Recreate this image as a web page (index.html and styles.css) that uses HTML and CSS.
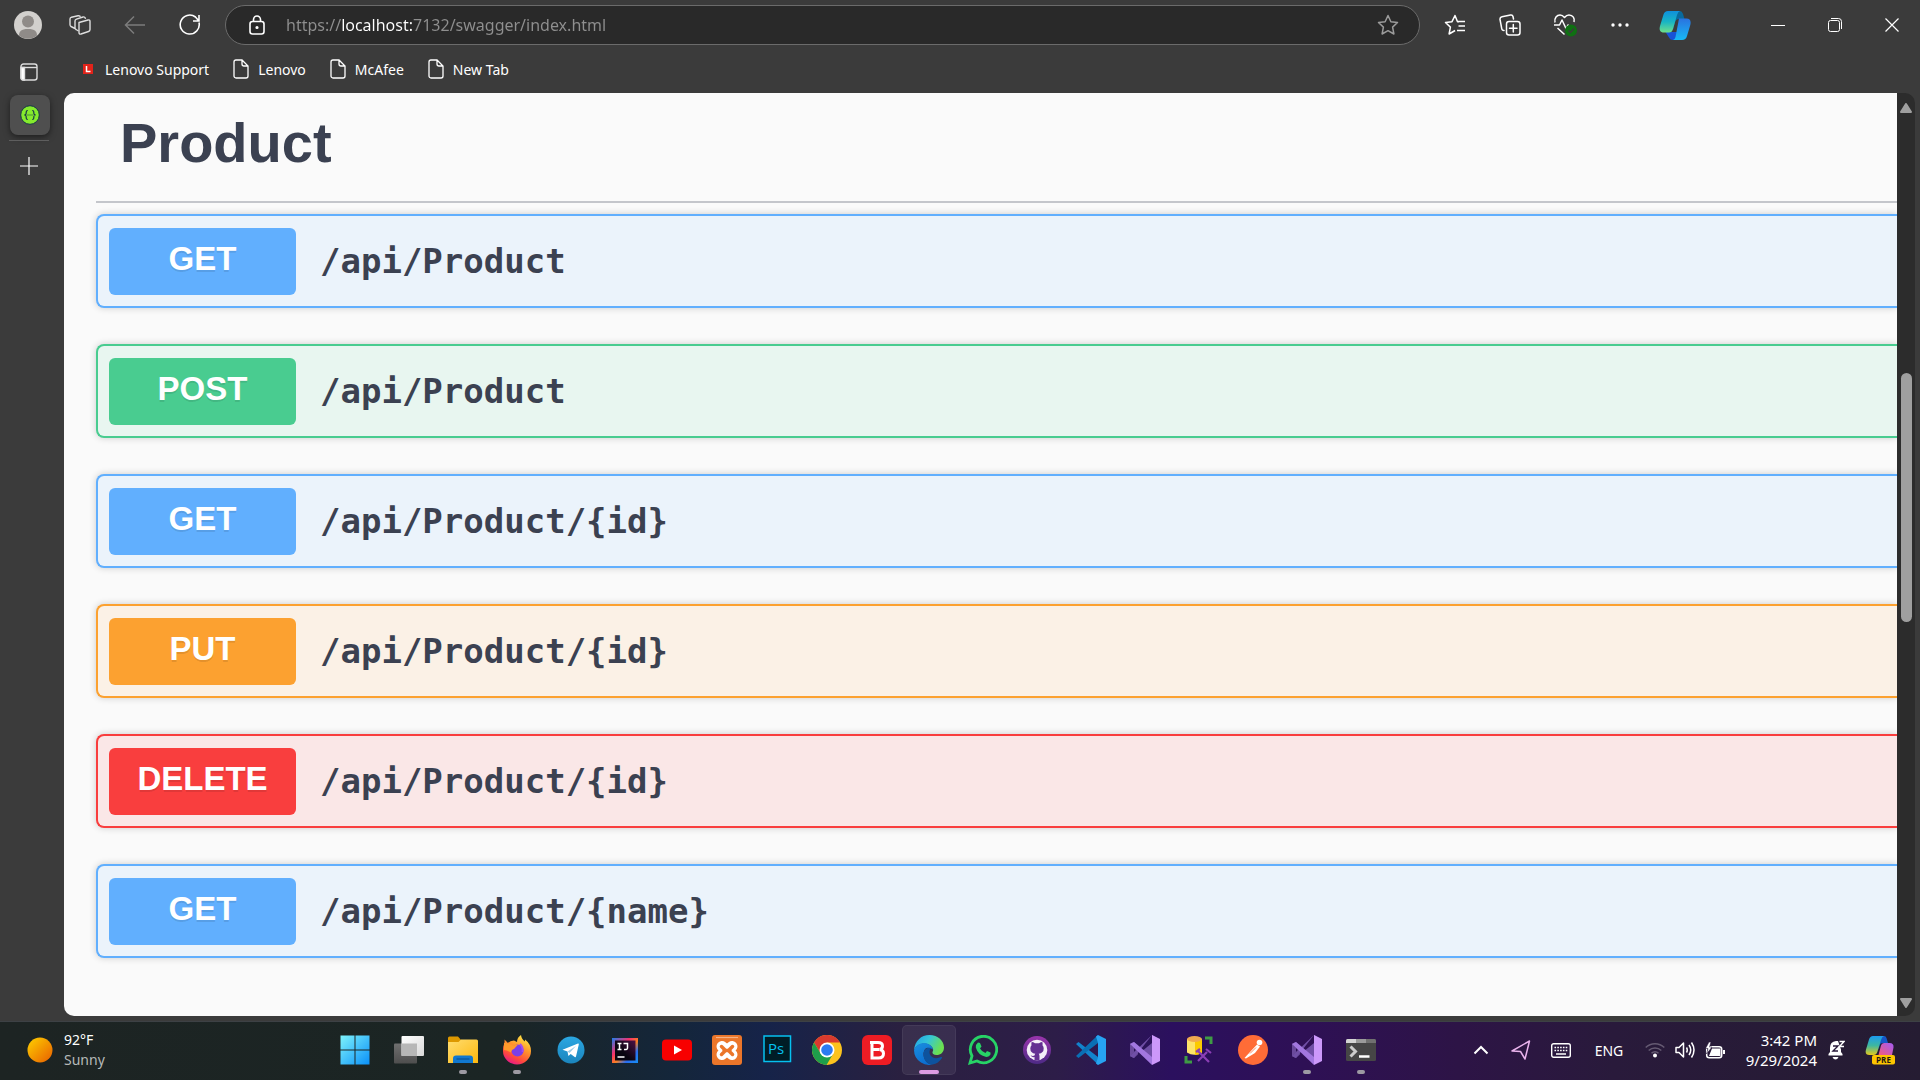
FILE: index.html
```html
<!DOCTYPE html>
<html lang="en">
<head>
<meta charset="utf-8">
<meta name="viewport" content="width=device-width, initial-scale=1">
<title>Swagger UI</title>
<link rel="stylesheet" href="styles.css">
</head>
<body>
<svg class="defs" aria-hidden="true">
  <defs>
    <linearGradient id="sun" x1="0" y1="0" x2="1" y2="1"><stop offset=".1" stop-color="#fcc600"/><stop offset="1" stop-color="#e85e00"/></linearGradient>
    <linearGradient id="win" x1="0" y1="0" x2="1" y2="1"><stop offset="0" stop-color="#7ef3fb"/><stop offset="1" stop-color="#0a90f8"/></linearGradient>
    <linearGradient id="folder" x1="0" y1="0" x2="1" y2="1"><stop offset="0" stop-color="#ffdd70"/><stop offset="1" stop-color="#fdb80e"/></linearGradient>
    <linearGradient id="fox" x1=".8" y1="0" x2=".3" y2="1"><stop offset="0" stop-color="#fff04a"/><stop offset=".4" stop-color="#ff9a2b"/><stop offset=".75" stop-color="#ff4a3c"/><stop offset="1" stop-color="#e5178c"/></linearGradient>
    <linearGradient id="tele" x1="0" y1="0" x2="0" y2="1"><stop offset="0" stop-color="#2ba7e2"/><stop offset="1" stop-color="#1b85bd"/></linearGradient>
    <linearGradient id="idea" x1="0" y1="0" x2="1" y2="1"><stop offset="0" stop-color="#1b7ff0"/><stop offset=".35" stop-color="#f7316c"/><stop offset=".55" stop-color="#fc8020"/><stop offset=".75" stop-color="#2a6df0"/><stop offset="1" stop-color="#1690f5"/></linearGradient>
    <linearGradient id="ideabg" x1="0" y1="1" x2="1" y2="0"><stop offset=".4" stop-color="#080510"/><stop offset="1" stop-color="#4d1046"/></linearGradient>
    <linearGradient id="edgea" x1="0" y1="0" x2="1" y2=".4"><stop offset="0" stop-color="#1f9fe8"/><stop offset=".5" stop-color="#35c6d8"/><stop offset="1" stop-color="#6be051"/></linearGradient>
    <linearGradient id="edgeb" x1="0" y1="0" x2=".5" y2="1"><stop offset="0" stop-color="#1a8fe0"/><stop offset="1" stop-color="#0c6ed0"/></linearGradient>
    <linearGradient id="cpa" x1="0" y1="0" x2="0" y2="1"><stop offset="0" stop-color="#0f8fdc"/><stop offset=".5" stop-color="#18b5c4"/><stop offset="1" stop-color="#6fe08a"/></linearGradient>
    <linearGradient id="cpb" x1="0" y1="1" x2="0" y2="0"><stop offset="0" stop-color="#17b9f5"/><stop offset="1" stop-color="#2a72df"/></linearGradient>
    <linearGradient id="cpc" x1="0" y1="0" x2="0" y2="1"><stop offset="0" stop-color="#1c9cf0"/><stop offset=".5" stop-color="#3db7a0"/><stop offset="1" stop-color="#e4c91d"/></linearGradient>
    <linearGradient id="cpd" x1="1" y1="0" x2="0" y2="1"><stop offset="0" stop-color="#a25bf5"/><stop offset="1" stop-color="#f25a7d"/></linearGradient>
    <linearGradient id="git" x1="0" y1="0" x2="0" y2="1"><stop offset="0" stop-color="#9a35ad"/><stop offset="1" stop-color="#4d2a85"/></linearGradient>
    <linearGradient id="tv" x1="0" y1="0" x2="1" y2="1"><stop offset="0" stop-color="#fff"/><stop offset="1" stop-color="#d9d9d9"/></linearGradient>
    <linearGradient id="tv2" x1="0" y1="0" x2="0" y2="1"><stop offset="0" stop-color="#6f6f6f"/><stop offset="1" stop-color="#4e4e4e"/></linearGradient>
    <symbol id="page" viewBox="0 0 16 20"><path d="M3 1h6l6 6v10a2 2 0 0 1-2 2H3a2 2 0 0 1-2-2V3a2 2 0 0 1 2-2zM9 1v4a2 2 0 0 0 2 2h4" fill="none" stroke="#fff" stroke-width="1.3"/></symbol>
    <symbol id="vs" viewBox="0 0 30 30"><path d="M0 9l4-2v16l-4-2z" fill="#6b4a9c"/><path d="M4 7l4 3.500v9L4 23l-4-2 6-6-6-6z" fill="#60438f"/><path d="M4 7L22 29l7-3V4l-7-4L4 23l-4-2L22 0v8L11 17z" fill="#704fa6"/><path d="M0 9l4-2 18 15v8L0 9z" fill="#a277df"/><path d="M22 0l8 4v22l-8 4z" fill="#cc98fa"/></symbol>
  </defs>
</svg>

<div class="screen">
  <div class="browser">
    <header class="toolbar">
      <button class="tool profile" aria-label="Profile"><svg width="28" height="28" viewBox="0 0 28 28"><circle cx="14" cy="14" r="14" fill="#d2d0cd"/><circle cx="14" cy="10.500" r="6" fill="#8f8b88"/><path d="M5 24.500c0-4 2-6.500 9-6.500s9 2.500 9 6.500a14 14 0 0 1-18 0z" fill="#8f8b88"/></svg></button>
      <button class="tool" aria-label="Workspaces"><svg width="22" height="20" viewBox="0 0 22 20" fill="none" stroke="#dedede" stroke-width="1.400" stroke-linejoin="round"><path d="M10 7.500l9-2.500q2-.5 2 1.500v8q0 1.500-1.500 2l-7.500 2.500q-2 .5-2-1.500z"/><path d="M9.500 16l-2.500-1.500q-1-.5-1-2V6q0-1.300 1.500-1.800L14 2q2-.5 2.500 1.800M6 13.500l-4-2q-1-.5-1-2V4q0-1.300 1.500-1.800L9 .8q2-.3 2.500 1"/></svg></button>
      <button class="tool" aria-label="Back"><svg width="22" height="20" viewBox="0 0 22 20" fill="none" stroke="#7c7c7c" stroke-width="1.500"><path d="M21 10H1.500M10 1.500L1.500 10l8.500 8.500"/></svg></button>
      <button class="tool" aria-label="Refresh"><svg width="22" height="22" viewBox="0 0 22 22" fill="none" stroke="#fff" stroke-width="1.600"><path d="M20 8.500A9.500 9.500 0 1 1 16.500 3l3 3.500M20 1v6h-6"/></svg></button>
      <form class="omnibox">
        <svg width="18" height="20" viewBox="0 0 18 20" fill="none" stroke="#fff" stroke-width="1.600"><rect x="2" y="6.500" width="14" height="12.500" rx="2.500"/><path d="M5.500 6.500V4.500a3.500 3.500 0 0 1 7 0v2"/><circle cx="9" cy="12.500" r=".8" fill="#fff"/></svg>
        <input class="url" type="text" aria-label="Address" value="https://localhost:7132/swagger/index.html">
        <button class="star" type="button" aria-label="Add to favorites"><svg width="22" height="22" viewBox="0 0 22 22" fill="none" stroke="#9b9b9b" stroke-width="1.500" stroke-linejoin="round"><path d="M11 1.500l2.900 6.200 6.600.8-4.900 4.600 1.300 6.900L11 16.700 5.100 20l1.300-6.900L1.500 8.500l6.600-.8z"/></svg></button>
      </form>
      <button class="tool" aria-label="Favorites"><svg width="22" height="22" viewBox="0 0 22 22" fill="none" stroke="#fff" stroke-width="1.500" stroke-linejoin="round"><path d="M15 7.700H13.500L11 1.500 8 7.700l-6.500.8 4.900 4.600L5.100 20l6-3.500M13 7.500h8M14.500 12h6.500M13 16.500h8"/></svg></button>
      <button class="tool" aria-label="Collections"><svg width="22" height="22" viewBox="0 0 22 22" fill="none" stroke="#fff" stroke-width="1.500" stroke-linecap="round"><rect x="7.500" y="7.500" width="13.500" height="13.500" rx="2.500"/><path d="M14.300 10.500v7.500M10.500 14.300h7.500M5 16.500q-2 0-2.300-2L1 5.500Q.8 3.300 3 2.800L11.500 1q2-.4 2.500 1.500L14.500 5"/></svg></button>
      <button class="tool" aria-label="Browser essentials"><svg width="24" height="24" viewBox="0 0 24 24" fill="none" stroke="#fff" stroke-width="1.500" stroke-linejoin="round"><path d="M2 9.500C1 5 4 2 7 2q2.500 0 4.500 2.500Q13.500 2 16 2c4 0 6 3.500 5 7M1 12h5.500L9 7l4 8.500 2.500-4M4.500 15l7 6.500"/><circle cx="18" cy="17.500" r="6" fill="#0f7012" stroke="none"/><path d="M15.500 17.500l2 2 3.500-4" stroke="#3b3b3b"/></svg></button>
      <button class="tool" aria-label="Settings and more"><svg width="18" height="6" viewBox="0 0 18 6" fill="#fff"><circle cx="2" cy="3" r="1.700"/><circle cx="9" cy="3" r="1.700"/><circle cx="16" cy="3" r="1.700"/></svg></button>
      <button class="tool" aria-label="Copilot"><svg width="32" height="30" viewBox="0 0 32 30"><path d="M15 1h6q2 0 3 3l1.500 5H20q-3 0-4 3l-2 8z" fill="#096a9e"/><path d="M6.500 22H20l-3.500 8H14q-3 0-4-2.500z" fill="#1853d6"/><path d="M9 1h12q-2 .5-3 4l-4 14q-1 3.500-4 3.500H5C1 22.500 0 20 1 16L4.500 4.500Q5.500 1 9 1z" fill="url(#cpa)"/><path d="M20 8.500h7.500C31 8.500 32.300 11 31.300 15L28 26q-1 4-5 4h-9q2-.5 2.500-3z" fill="url(#cpb)"/></svg></button>
      <div class="window-controls">
        <button aria-label="Minimize"><svg width="14" height="14" viewBox="0 0 14 14" stroke="#fff"><path d="M0 7.500h14"/></svg></button>
        <button aria-label="Restore"><svg width="14" height="14" viewBox="0 0 14 14" fill="none" stroke="#fff"><rect x=".5" y="2.500" width="11" height="11" rx="2"/><path d="M3 .5h7.500q3 0 3 3V11"/></svg></button>
        <button aria-label="Close"><svg width="14" height="14" viewBox="0 0 14 14" stroke="#fff" stroke-width="1.200"><path d="M.5.5l13 13M13.500.5l-13 13"/></svg></button>
      </div>
    </header>

    <div class="workspace">
      <aside class="tabs">
        <button class="tab-toggle" aria-label="Tab actions"><svg width="18" height="18" viewBox="0 0 18 18" fill="none" stroke="#dcdcdc" stroke-width="1.400"><rect x="1" y="1" width="16" height="16" rx="2.500"/><path d="M1 4.500h16"/><path d="M1 4.500h3.500V17H3a2 2 0 0 1-2-2z" fill="#fff"/></svg></button>
        <button class="tab" aria-label="Swagger UI"><svg width="20" height="20" viewBox="0 0 20 20"><circle cx="10" cy="10" r="9.300" fill="#85ea2d" stroke="#173647" stroke-width="1"/><path d="M7.800 5.500Q6.200 5.500 6.200 7v1.300Q6.200 10 4.300 10q1.900 0 1.900 1.700V13q0 1.500 1.600 1.500M12.200 5.500q1.600 0 1.600 1.500v1.300q0 1.700 1.900 1.700-1.900 0-1.900 1.700V13q0 1.500-1.600 1.500" fill="none" stroke="#173647" stroke-width="1.200"/><path d="M7.500 10h5" stroke="#173647" stroke-width="1.200" stroke-dasharray="1 1"/></svg></button>
        <button class="new-tab" aria-label="New tab"><svg width="18" height="18" viewBox="0 0 18 18" stroke="#fff" stroke-width="1.200"><path d="M9 0v18M0 9h18"/></svg></button>
      </aside>
      <div class="content">
        <nav class="bookmarks">
          <a href="#"><svg width="16" height="20" viewBox="0 0 16 20"><rect x="3" y="5" width="10" height="10" fill="#e2231a"/><path d="M6.500 7v5.500h4" fill="none" stroke="#fff" stroke-width="1.500"/></svg>Lenovo Support</a>
          <a href="#"><svg width="16" height="20"><use href="#page"/></svg>Lenovo</a>
          <a href="#"><svg width="16" height="20"><use href="#page"/></svg>McAfee</a>
          <a href="#"><svg width="16" height="20"><use href="#page"/></svg>New Tab</a>
        </nav>
        <div class="viewport">
          <main class="api">
            <h1 class="tag">Product</h1>
            <button class="op get"><span class="method">GET</span><span class="path">/api/Product</span></button>
            <button class="op post"><span class="method">POST</span><span class="path">/api/Product</span></button>
            <button class="op get"><span class="method">GET</span><span class="path">/api/Product/{id}</span></button>
            <button class="op put"><span class="method">PUT</span><span class="path">/api/Product/{id}</span></button>
            <button class="op delete"><span class="method">DELETE</span><span class="path">/api/Product/{id}</span></button>
            <button class="op get"><span class="method">GET</span><span class="path">/api/Product/{name}</span></button>
          </main>
          <div class="scrollbar">
            <svg width="12" height="10" viewBox="0 0 12 10"><path d="M6 1l5 8H1z" fill="#9f9f9f" stroke="#9f9f9f" stroke-width="2" stroke-linejoin="round"/></svg>
            <div class="track"><div class="thumb"></div></div>
            <svg width="12" height="10" viewBox="0 0 12 10"><path d="M6 9l5-8H1z" fill="#9f9f9f" stroke="#9f9f9f" stroke-width="2" stroke-linejoin="round"/></svg>
          </div>
        </div>
      </div>
    </div>
  </div>

  <footer class="taskbar">
    <button class="weather">
      <svg width="26" height="26" viewBox="0 0 26 26"><circle cx="13" cy="13" r="12.500" fill="url(#sun)"/></svg>
      <span class="two-line"><span>92°F</span><span class="dim">Sunny</span></span>
    </button>
    <div class="apps">
      <button class="app" aria-label="Start"><svg viewBox="0 0 30 30"><path d="M.5.500h14v14H.5zM15.500.500h14v14h-14zM.5 15.500h14v14H.5zM15.500 15.500h14v14h-14z" fill="url(#win)"/></svg></button>
      <button class="app" aria-label="Task view"><svg viewBox="0 0 30 30"><rect x="0" y="8.500" width="23" height="20" rx="1" fill="url(#tv2)"/><rect x="7.500" y="1" width="22.500" height="20" rx="1" fill="url(#tv)"/><path d="M7.500 8.500H23V21H7.500z" fill="#b7b7b7"/></svg></button>
      <button class="app open" aria-label="File Explorer"><svg viewBox="0 0 30 30"><path d="M0 3q0-1.500 1.500-1.500h8.500l3 3.500v4H0z" fill="#dd9800"/><path d="M0 7h10.500L13 4.500h15.500Q30 4.500 30 6v22H0z" fill="url(#folder)"/><path d="M5 28v-4.500q0-3 3-3h14q3 0 3 3V28z" fill="#1178cf"/><path d="M8.500 24h13" stroke="#064a8c"/></svg></button>
      <button class="app open" aria-label="Firefox"><svg viewBox="0 0 30 30"><path d="M1 14C1 10 3 9 2.500 4.500L6 8q2-2.500 6-2.500l3 1.500q0-4.500 4-7 .5 4 4 6.500V4.500Q29 9 29 16a14 13.500 0 0 1-28 0z" fill="url(#fox)"/><circle cx="15.500" cy="15.500" r="6" fill="#7a3fe8"/><path d="M2 8q5 0 9 2.500l5-1-4 4.500q-3 1-3 3.500Q5 15 2 15z" fill="#ff9a2b"/><path d="M18 9q3.500 3.500 2.500 8" fill="none" stroke="#a44cf0" stroke-width="2"/></svg></button>
      <button class="app" aria-label="Telegram"><svg viewBox="0 0 30 30"><circle cx="15" cy="15" r="13.500" fill="url(#tele)"/><path d="M6.500 14.800L22 8.500q1-.2.800 1L20 21.500q-.3 1-1.300.4l-4-3-2.300 2-.9-4.300z" fill="#fff"/><path d="M11.500 16.500l8.500-5.500-6.500 7z" fill="#9ccbe6"/></svg></button>
      <button class="app" aria-label="IntelliJ IDEA"><svg viewBox="0 0 30 30"><path d="M2 3h26v25H2z" fill="url(#idea)"/><path d="M5 5.500h20.500v20H5z" fill="url(#ideabg)"/><path d="M7.500 8.500h4M7.500 14.500h4M9.500 8.500v6M13.500 8.500h4v4.500q0 2-3.500 1.500M7.500 22h7" fill="none" stroke="#fff" stroke-width="1.500"/></svg></button>
      <button class="app slim" aria-label="YouTube"><svg viewBox="0 0 30 30"><rect x="0" y="4.500" width="30" height="21" rx="4" fill="#f80000"/><path d="M12 10.500l8 4.500-8 4.500z" fill="#fff"/></svg></button>
      <button class="app slim" aria-label="XAMPP"><svg viewBox="0 0 30 30"><rect width="30" height="30" rx="3" fill="#eb762a"/><path d="M4 2.500h22" stroke="#f6b284" stroke-width="1.200"/><path d="M10 11.500l10 8M20 11.500l-10 8" stroke="#fff" stroke-width="11" stroke-linecap="round"/><path d="M9.500 11.500l4 4-4 4M20.500 11.500l-4 4 4 4M12 15.500h6" fill="none" stroke="#eb762a" stroke-width="3.500" stroke-linecap="round"/></svg></button>
      <button class="app slim" aria-label="Photoshop"><svg viewBox="0 0 30 30"><rect x="2" y="1" width="26.500" height="25.500" fill="#001d26" stroke="#06c1f0" stroke-width="1.500"/><text x="6" y="19" class="ps">Ps</text></svg></button>
      <button class="app slim" aria-label="Chrome"><svg viewBox="0 0 30 30"><circle cx="15" cy="15" r="15" fill="#fcc31e"/><path d="M2 7.500A15 15 0 0 1 28 7.500H15L9 19z" fill="#d93a2e"/><path d="M2 7.500A15 15 0 0 0 14.500 30L21 19H9z" fill="#1e9f4b"/><circle cx="15" cy="15" r="7.500" fill="#fff"/><circle cx="15" cy="15" r="5.800" fill="#2c7bf2"/></svg></button>
      <button class="app slim" aria-label="Bitdefender"><svg viewBox="0 0 30 30"><rect width="30" height="30" rx="6" fill="#ee1c24"/><path d="M8 7.500h8q4.500 0 4.500 3.500 0 3-3 3.500 4 .5 4 4 0 4.500-5 4.500h-6.500V7.500M11 14.500h6" fill="none" stroke="#fff" stroke-width="3"/></svg></button>
      <button class="app active" aria-label="Microsoft Edge"><svg viewBox="0 0 30 30"><path d="M0 15C1 6 7 0 15.500 0 24 0 30 6 30 12.500c0 5-3.500 7.500-7.500 7.500-3 0-4.500-1.500-4-3 1-1.500 1-3-.5-5C14 7 4 7 0 15z" fill="url(#edgea)"/><path d="M0 15Q3 8 10 8t9 6.500Q11 9.500 9.500 18c-.5 6 4 11.500 9 11.500Q12 31 7 27.500 0 23 0 15z" fill="url(#edgeb)"/><path d="M18 13q-8-1-8.500 5.500C9 25 14 30 18.500 29.500q6-1 9.500-6.500.5-1.500-1-1-4.500 2-8 .5-5-2.500-3-8z" fill="#0d539e"/></svg></button>
      <button class="app" aria-label="WhatsApp"><svg viewBox="0 0 30 30"><path d="M2 28l2-7A13.200 13.200 0 1 1 9 26z" fill="none" stroke="#27d366" stroke-width="2.800"/><path d="M10 7.500l2 .5 1.500 3.500-1.500 2q2 3.500 5.500 4.500l1.500-2 3.500 1.500v2q-1.500 3-5 2.300Q10 20 7.800 12.500 7.500 9.500 10 7.500z" fill="#27d366"/></svg></button>
      <button class="app" aria-label="GitHub Desktop"><svg viewBox="0 0 30 30"><circle cx="15" cy="15" r="14" fill="url(#git)"/><circle cx="15" cy="15" r="10.300" fill="#f4eff8"/><path d="M12.500 25v-3q-3 .7-4-2 2 1.500 4 .5.200-1.200.8-1.700-5-.8-5-5.300 0-2 1.200-3.300-.4-1.500.2-3.200 1.500 0 3.300 1.300h4q1.800-1.300 3.300-1.300.6 1.700.2 3.200 1.200 1.300 1.200 3.300 0 4.500-5 5.300.8.700.8 2.200v4z" fill="#643092"/></svg></button>
      <button class="app" aria-label="Visual Studio Code"><svg viewBox="0 0 30 30"><path d="M0 9l2.500-2L22 22v7.500z" fill="#1283cc"/><path d="M0 21l2.500 2L22 8V0z" fill="#0a6fb4"/><path d="M22 0l8 4v22l-8 4-2-1.500 2-6V8l-2-6.500z" fill="#27a3f1"/></svg></button>
      <button class="app" aria-label="Visual Studio"><svg><use href="#vs"/></svg></button>
      <button class="app" aria-label="SQL Server Management Studio"><svg viewBox="0 0 30 30"><path d="M3 4v13.500q7 4.500 15 0V4z" fill="#fde36a"/><path d="M11 4v16q4 0 7-2.500V4z" fill="#fcca00"/><ellipse cx="10.500" cy="4" rx="7.500" ry="3" fill="#f0aa50"/><path d="M21 3h6v6M2 21v6h6" fill="none" stroke="#3f9b45" stroke-width="3"/><path d="M14 26l9-9M14 16l11 11M12 17l4-3M22 14l5 4" stroke="#8b3fb5" stroke-width="2.200"/></svg></button>
      <button class="app" aria-label="Postman"><svg viewBox="0 0 30 30"><circle cx="15" cy="15" r="15" fill="#ff6c37"/><circle cx="21.500" cy="7.500" r="2.800" fill="#fff"/><path d="M19 9.500l3 2-5 6.500-9 5.500-1.500-.5L12 17z" fill="#fff"/><path d="M12 18.500l6-6" stroke="#ff6c37" stroke-width=".8"/></svg></button>
      <button class="app open" aria-label="Visual Studio"><svg><use href="#vs"/></svg></button>
      <button class="app open" aria-label="Terminal"><svg viewBox="0 0 30 30"><rect y="4" width="30" height="22" rx="1.500" fill="#464646"/><path d="M0 8V5.500Q0 4 1.500 4H10v4z" fill="#d4d4d4"/><path d="M10 4h10v4H10z" fill="#9a9a9a"/><path d="M20 4h8.500Q30 4 30 5.500V8H20z" fill="#707070"/><path d="M4.500 11.500l5 5-5 5" fill="none" stroke="#ccc" stroke-width="3"/><path d="M13 21.500h10.500" stroke="#fff" stroke-width="2.500"/></svg></button>
    </div>
    <div class="tray">
      <button aria-label="Show hidden icons"><svg width="16" height="10" viewBox="0 0 16 10"><path d="M1.500 8.500L8 2l6.500 6.500" fill="none" stroke="#fff" stroke-width="2"/></svg></button>
      <button aria-label="Location"><svg width="20" height="20" viewBox="0 0 20 20"><path d="M1 11L18.500 1 14 19l-4.500-7.500z" fill="none" stroke="#e9b3ec" stroke-width="1.500" stroke-linejoin="round"/></svg></button>
      <button aria-label="Touch keyboard"><svg width="20" height="15" viewBox="0 0 20 15" fill="none" stroke="#fff"><rect x=".7" y=".7" width="18.600" height="13.600" rx="2" stroke-width="1.400"/><path d="M3.500 4.500h13M3.500 7.500h13" stroke-width="1.600" stroke-dasharray="1.600 1.200"/><path d="M5 11h10" stroke-width="1.500"/></svg></button>
      <button class="lang">ENG</button>
      <button class="status" aria-label="Network, volume, battery">
        <svg width="20" height="16" viewBox="0 0 20 16" fill="none" stroke="#655a72" stroke-width="1.500"><path d="M.7 5.500a13.500 13.500 0 0 1 18.600 0M3.700 8.500a9 9 0 0 1 12.600 0M6.500 11.300a5 5 0 0 1 7 0"/><circle cx="10" cy="13.500" r="2" fill="#fff" stroke="none"/></svg>
        <svg width="20" height="18" viewBox="0 0 20 18" fill="none" stroke="#fff" stroke-width="1.500" stroke-linejoin="round"><path d="M1 6.500h3L8.500 2v14L4 11.500H1zM11.500 6.500q1.500 2.500 0 5M14 4q3.500 5 0 10M16.500 1.500q5 7.500 0 15"/></svg>
        <svg width="20" height="17" viewBox="0 0 20 17"><rect x="1.700" y="4.700" width="15" height="11" rx="2.500" fill="none" stroke="#fff" stroke-width="1.500"/><path d="M7 6.500h8.500v7.500H4zM18 8h2v4h-2z" fill="#fff"/><path d="M4 0L.5 6.500H3L1.500 12 7 5H4.500L6 0z" fill="#fff" stroke="#291a3b" stroke-width=".6"/></svg>
      </button>
      <button class="clock"><span class="two-line"><span>3:42 PM</span><span>9/29/2024</span></span><svg width="18" height="20" viewBox="0 0 18 20"><path d="M1.500 15.500V14L3 12V8q0-6.500 6-7h2l3 8.500V12l1.500 2v1.500z" fill="#fff"/><path d="M5.500 17h6q-1 2.500-3 2.500t-3-2.500z" fill="#fff"/><path d="M6 6h5l-5 5h5" fill="none" stroke="#291a3b" stroke-width="1.400"/><path d="M12.500 1.500h4.500l-4.500 5h4.500" fill="none" stroke="#fff" stroke-width="1.400"/></svg></button>
      <button class="copilot" aria-label="Copilot preview"><svg width="30" height="30" viewBox="0 0 30 30"><path d="M14 1h5q2 0 2.500 2L23 8h-5q-3 0-3.500 3L13 15z" fill="#1557c8"/><path d="M8 1h11q-2 .5-3 4l-3.500 11.500q-1 3.500-4 3.500H4.500Q-.5 20 1 14.500L4 4.500Q5 1 8 1z" fill="url(#cpc)"/><path d="M19 8h5.500Q29 8 28.500 12.500L27 20H13.500l2.500-9.500Q16.500 8 19 8z" fill="url(#cpd)"/><rect x="7" y="20" width="23" height="9.500" rx="2" fill="#fdc500"/><text x="18.500" y="28" class="pre">PRE</text></svg></button>
    </div>
  </footer>
</div>
</body>
</html>
```

FILE: styles.css
```css
* { box-sizing: border-box; }

body {
  margin: 0;
  background: #3b3b3b;
  color: #fff;
  font-family: "Noto Sans", "Open Sans", sans-serif;
  font-size: 14px;
}

button {
  margin: 0;
  padding: 0;
  border: 0;
  background: none;
  color: inherit;
  font: inherit;
}

svg { display: block; flex: none; }

.defs { position: absolute; width: 0; height: 0; }

.screen {
  display: flex;
  flex-direction: column;
  min-height: 100vh;
}

.browser {
  flex: 1;
  display: flex;
  flex-direction: column;
  padding-bottom: 5px;
}

/* Address bar row */
.toolbar {
  display: flex;
  align-items: center;
  height: 49px;
  padding-left: 4px;
}

.tool {
  display: flex;
  align-items: center;
  justify-content: center;
  width: 55px;
  height: 40px;
}

.profile { width: 48px; }

.omnibox {
  flex: 1;
  display: flex;
  align-items: center;
  height: 40px;
  margin: 0 7px 0 8px;
  padding: 0 20px 0 22px;
  border: 1px solid #6b6b6b;
  border-radius: 20px;
  background: #292929;
}

.url {
  flex: 1;
  min-width: 0;
  margin-left: 20px;
  padding: 0;
  border: 0;
  outline: 0;
  background: linear-gradient(90deg, #8f8f8f 56px, #fff 56px, #fff 126px, #8f8f8f 126px);
  background-clip: text;
  -webkit-background-clip: text;
  color: transparent;
  font: 16px/24px "Noto Sans", "Open Sans", sans-serif;
}

.window-controls {
  display: flex;
  margin-left: 47px;
}

.window-controls button {
  display: flex;
  align-items: center;
  justify-content: center;
  width: 57px;
  height: 40px;
}

/* Vertical tabs and page */
.workspace {
  flex: 1;
  display: flex;
  padding-right: 5px;
}

.tabs {
  display: flex;
  flex-direction: column;
  align-items: center;
  width: 64px;
  padding: 14px 6px 0 0;
}

.tab {
  display: flex;
  align-items: center;
  justify-content: center;
  width: 40px;
  height: 40px;
  margin: 14px 0 5px 2px;
  border-radius: 8px;
  background: #4f4f4f;
  box-shadow: 0 2px 6px rgba(0, 0, 0, .5);
}

.new-tab {
  display: flex;
  justify-content: center;
  width: 40px;
  padding-top: 16px;
  border-top: 1px solid #5e5e5e;
}

.content {
  flex: 1;
  min-width: 0;
  display: flex;
  flex-direction: column;
}

.bookmarks {
  display: flex;
  align-items: center;
  gap: 24px;
  height: 44px;
  padding: 0 0 4px 16px;
}

.bookmarks a {
  display: flex;
  align-items: center;
  gap: 9px;
  color: #fff;
  text-decoration: none;
}

.viewport {
  flex: 1;
  display: flex;
  overflow: hidden;
  border-radius: 10px;
}

.api {
  flex: 1;
  display: flex;
  flex-direction: column;
  gap: 36px;
  padding: 18px 0 56px 32px;
  overflow: hidden;
  background: #fafafa;
}

.tag {
  margin: 0 0 -25px;
  padding: 0 0 26px 24px;
  border-bottom: 2px solid #c4c6cb;
  color: #3b4151;
  font: bold 56px/64px "Liberation Sans", Arial, sans-serif;
}

.op {
  display: flex;
  align-items: center;
  height: 94px;
  padding-left: 11px;
  border: 2px solid;
  border-right: 0;
  border-radius: 8px 0 0 8px;
  box-shadow: 0 0 7px rgba(0, 0, 0, .19);
  text-align: left;
}

.method {
  width: 187px;
  height: 67px;
  border-radius: 6px;
  color: #fff;
  font: bold 33px/62px "Liberation Sans", Arial, sans-serif;
  text-align: center;
  text-shadow: 0 2px 0 rgba(0, 0, 0, .1);
}

.path {
  padding-left: 24px;
  color: #3b4151;
  font: bold 34px/40px "DejaVu Sans Mono", monospace;
}

.get { border-color: #61affe; background: #ebf3fb; }
.get .method { background: #61affe; }
.post { border-color: #49cc90; background: #e8f6f0; }
.post .method { background: #49cc90; }
.put { border-color: #fca130; background: #fbf1e6; }
.put .method { background: #fca130; }
.delete { border-color: #f93e3e; background: #fae7e7; }
.delete .method { background: #f93e3e; }

.scrollbar {
  display: flex;
  flex-direction: column;
  align-items: center;
  gap: 6px;
  width: 18px;
  padding: 10px 0 8px;
  background: #2c2c2c;
}

.track {
  flex: 1;
  display: flex;
  flex-direction: column;
  width: 11px;
}

.track::before { content: ""; flex: 254; }
.track::after { content: ""; flex: 370; }

.thumb {
  flex: 249;
  border-radius: 6px;
  background: #9f9f9f;
}

/* Taskbar */
.taskbar {
  display: flex;
  align-items: center;
  height: 59px;
  padding-bottom: 2px;
  border-top: 1px solid #3d4145;
  background: linear-gradient(90deg, #1d2423 0%, #1b2524 26%, #14263a 35%, #162349 40%, #2a2040 47%, #2d1d48 55%, #2b105e 61%, #2e1055 68%, #2d1446 76%, #291a3b 84%, #251c32 100%);
}

.weather {
  display: flex;
  align-items: center;
  gap: 11px;
  width: 328px;
  padding-left: 27px;
  text-align: left;
}

.two-line {
  display: flex;
  flex-direction: column;
  line-height: 20px;
}

.dim { color: #b5b9b8; }

.apps { display: flex; }

.app {
  display: flex;
  flex-direction: column;
  align-items: center;
  width: 54px;
  height: 50px;
  padding-top: 10px;
}

.app svg { width: 30px; height: 30px; }
.slim { width: 50px; }

.open::after,
.active::after {
  content: "";
  width: 8px;
  height: 4px;
  margin-top: 5px;
  border-radius: 2px;
  background: #9d9aa3;
}

.active {
  border-radius: 5px;
  background: rgba(255, 255, 255, .07);
  box-shadow: inset 0 0 0 1px rgba(255, 255, 255, .06);
}

.active::after { width: 20px; background: #dc9be2; }

.ps { fill: #06c1f0; font: 15px "Open Sans", sans-serif; }
.pre { fill: #1d1a10; font: bold 8px "Open Sans", sans-serif; text-anchor: middle; }

.tray {
  display: flex;
  align-items: center;
  margin-left: auto;
  padding-right: 25px;
}

.tray > button {
  display: flex;
  align-items: center;
  justify-content: center;
  width: 40px;
  height: 48px;
}

.tray > .lang { width: 56px; }
.tray > .status { gap: 10px; width: 96px; }
.tray > .clock { gap: 10px; width: 112px; justify-content: flex-end; font-size: 15px; text-align: right; }
.tray > .copilot { width: 50px; justify-content: flex-end; }
```
